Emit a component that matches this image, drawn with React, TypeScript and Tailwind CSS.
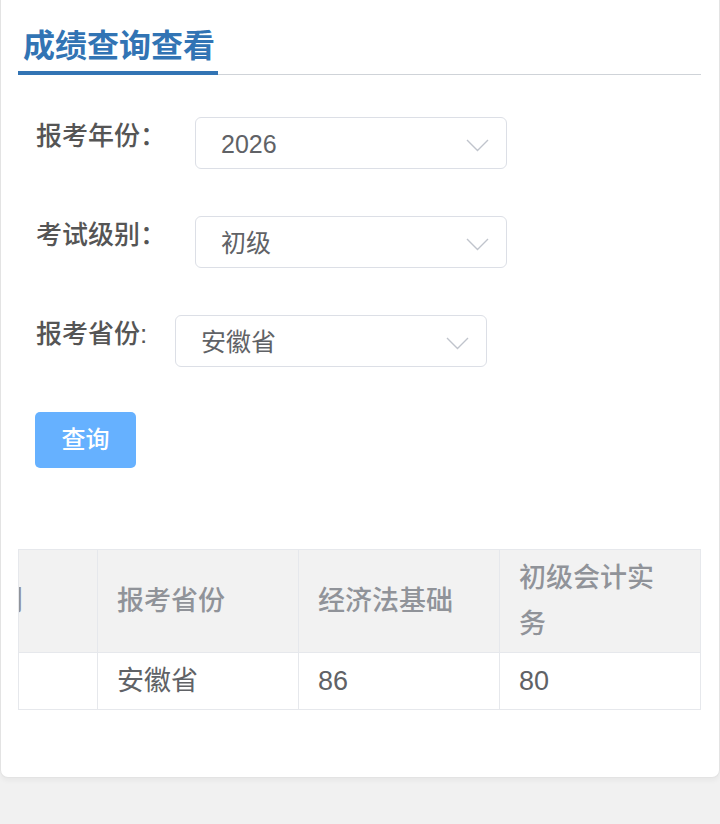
import React from "react";

const font = { fontFamily: '"Liberation Sans", "Noto Sans CJK SC", sans-serif' };

function Chevron() {
  return (
    <svg width="23" height="13" viewBox="0 0 23 13" className="mt-[4px]">
      <path d="M1 1 L11.5 11.5 L22 1" fill="none" stroke="#c0c4cc" strokeWidth="1.4" />
    </svg>
  );
}

function Select({ value }: { value: string }) {
  return (
    <div className="flex h-[52px] w-[312px] items-center justify-between rounded-[6px] border border-[#dcdfe6] bg-white pl-[25px] pr-[17px]">
      <span className="text-[25px] leading-[30px] text-[#606266] mt-[2px]">{value}</span>
      <Chevron />
    </div>
  );
}

function Row({ label, value, labelW }: { label: string; value: string; labelW: string }) {
  return (
    <div className="flex items-start">
      <div className={`${labelW} shrink-0 pl-[1px] text-[26px] leading-[38px] font-medium text-[#555]`}>{label}</div>
      <Select value={value} />
    </div>
  );
}

export default function App() {
  return (
    <div className="min-h-[824px] w-[720px] bg-[#f1f1f1]" style={font}>
      <div className="rounded-b-[8px] border-x border-b border-[#e3e3e3] bg-white pl-[17px] pr-[18px] pb-[67px] shadow-[0_3px_5px_rgba(0,0,0,0.04)]">
        <div className="border-b border-[#cfd3d8] pt-[26px]">
          <span className="-mb-px inline-block w-[200px] border-b-4 border-[#3274b4] pl-[5px] pb-[5px] text-[32px] font-bold leading-[40px] text-[#3274b4]">
            成绩查询查看
          </span>
        </div>

        <div className="flex flex-col gap-[47px] pl-[17px] pt-[42px]">
          <Row label="报考年份：" value="2026" labelW="w-[160px]" />
          <Row label="考试级别：" value="初级" labelW="w-[160px]" />
          <Row label="报考省份:" value="安徽省" labelW="w-[140px]" />
        </div>

        <div className="pl-[17px] pt-[45px]">
          <button className="h-[56px] w-[101px] rounded-[5px] bg-[#66b1ff] text-[24px] font-medium text-white">
            查询
          </button>
        </div>

        <div className="mt-[81px] overflow-hidden border-x border-[#e6e8ec]">
          <table className="ml-[-124px] w-[805px] table-fixed border-collapse text-[27px] leading-[46px]">
            <colgroup>
              <col className="w-[202px]" />
              <col className="w-[201px]" />
              <col className="w-[201px]" />
              <col className="w-[201px]" />
            </colgroup>
            <thead>
              <tr className="bg-[#f2f2f2] text-[#909399]">
                <th className="border border-[#e6e8ec] px-[19px] py-[5px] text-left align-middle font-medium">考试级别</th>
                <th className="border border-[#e6e8ec] px-[19px] py-[5px] text-left align-middle font-medium">报考省份</th>
                <th className="border border-[#e6e8ec] px-[19px] py-[5px] text-left align-middle font-medium">经济法基础</th>
                <th className="border border-[#e6e8ec] px-[19px] py-[5px] text-left align-middle font-medium">
                  初级会计实<br />务
                </th>
              </tr>
            </thead>
            <tbody>
              <tr className="text-[#606266]">
                <td className="border border-[#e6e8ec] px-[19px] py-[5px]">初级</td>
                <td className="border border-[#e6e8ec] px-[19px] py-[5px]">安徽省</td>
                <td className="border border-[#e6e8ec] px-[19px] py-[5px]">86</td>
                <td className="border border-[#e6e8ec] px-[19px] py-[5px]">80</td>
              </tr>
            </tbody>
          </table>
        </div>
      </div>
    </div>
  );
}
